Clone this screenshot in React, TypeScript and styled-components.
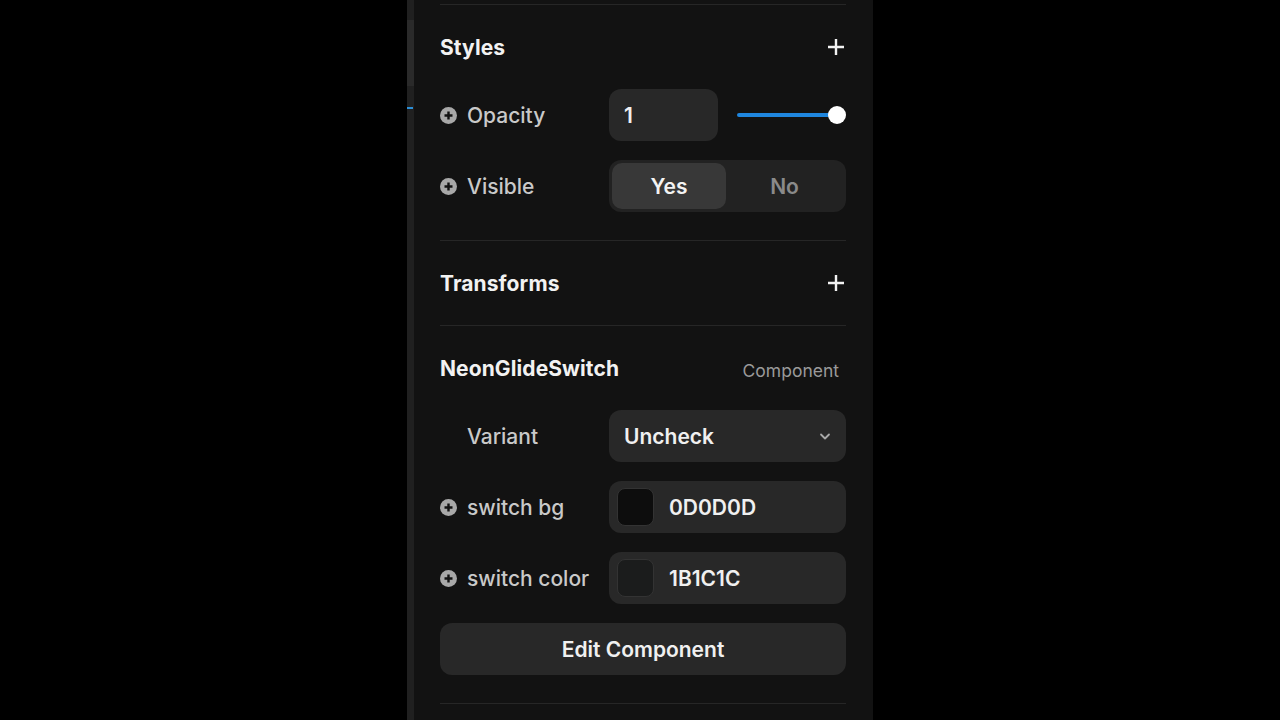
import React from 'react'
import styled, { createGlobalStyle } from 'styled-components'

const Global = createGlobalStyle`
  html, body { margin: 0; padding: 0; background: #000; }
  body { font-family: Inter, 'Noto Sans', sans-serif; -webkit-font-smoothing: antialiased; }
`

const Page = styled.div`
  width: 1280px;
  height: 720px;
  display: flex;
  background: #000;
  overflow: hidden;
`
const Spacer = styled.div`
  width: 407px;
`
const Gutter = styled.div`
  position: relative;
  width: 7px;
  background: #202020;
`
const Thumb = styled.div`
  margin-top: 20px;
  height: 66px;
  background: #2a2a2a;
`
const Tick = styled.div`
  position: absolute;
  top: 107px;
  left: 0;
  width: 6px;
  height: 2px;
  background: #2c8fd6;
`
const Panel = styled.div`
  width: 459px;
  box-sizing: border-box;
  background: #121212;
  padding: 0 27px 0 26px;
  display: flex;
  flex-direction: column;
`
const Section = styled.div<{ top?: boolean }>`
  border-top: 1px solid #262626;
  padding-bottom: ${(p) => (p.top ? 28 : 0)}px;
  display: flex;
  flex-direction: column;
  gap: 19px;
`
const FirstLine = styled.div`
  height: 4px;
`
const Header = styled.div`
  height: 84px;
  margin-bottom: -19px;
  display: flex;
  align-items: center;
  justify-content: space-between;
`
const Title = styled.div`
  color: #f2f2f2;
  font-size: 21px;
  font-weight: 700;
  letter-spacing: 0.1px;
`
const Meta = styled.div`
  color: #9a9a9a;
  font-size: 17.5px;
  margin-right: 7px;
  margin-top: 4px;
`
const Row = styled.div`
  display: grid;
  grid-template-columns: 169px 1fr;
  align-items: center;
  height: 52px;
`
const Label = styled.div<{ indent?: boolean }>`
  display: flex;
  align-items: center;
  gap: 10px;
  padding-left: ${(p) => (p.indent ? 27 : 0)}px;
  color: #c9c9c9;
  font-size: 21px;
  font-weight: 500;
`
const Field = styled.div<{ width?: number }>`
  height: 52px;
  box-sizing: border-box;
  width: ${(p) => (p.width ? p.width + 'px' : '100%')};
  background: #282828;
  border-radius: 12px;
  display: flex;
  align-items: center;
  padding: 0 15px;
  color: #f0f0f0;
  font-size: 21px;
  font-weight: 600;
`
const Split = styled.div`
  display: flex;
  align-items: center;
  gap: 19px;
`
const Track = styled.div`
  position: relative;
  flex: 1;
  height: 4px;
  background: #1f86de;
  border-radius: 2px;
  margin-right: 9px;
`
const Knob = styled.div`
  position: absolute;
  right: -9px;
  top: -7px;
  width: 18px;
  height: 18px;
  border-radius: 50%;
  background: #fff;
`
const Segments = styled.div`
  height: 52px;
  box-sizing: border-box;
  background: #222;
  border-radius: 12px;
  padding: 3px;
  display: grid;
  grid-template-columns: 114px 1fr;
`
const Segment = styled.div<{ active?: boolean }>`
  border-radius: 10px;
  background: ${(p) => (p.active ? '#383838' : 'transparent')};
  color: ${(p) => (p.active ? '#f3f3f3' : '#8a8a8a')};
  font-size: 21px;
  font-weight: 600;
  display: flex;
  align-items: center;
  justify-content: center;
`
const Select = styled(Field)`
  justify-content: space-between;
  padding-right: 14px;
`
const Swatch = styled.div<{ color: string }>`
  width: 37px;
  height: 38px;
  box-sizing: border-box;
  border-radius: 8px;
  background: ${(p) => p.color};
  border: 1px solid #333;
  margin: 0 15px 0 -7px;
`
const Button = styled.div`
  height: 52px;
  border-radius: 12px;
  background: #282828;
  color: #f0f0f0;
  font-size: 21px;
  font-weight: 600;
  display: flex;
  align-items: center;
  justify-content: center;
`

const PlusCircle = () => (
  <svg width="17" height="17" viewBox="0 0 17 17">
    <circle cx="8.5" cy="8.5" r="8.5" fill="#a8a8a8" />
    <path d="M8.5 4.5v8M4.5 8.5h8" stroke="#121212" strokeWidth="2.4" />
  </svg>
)

const Plus = () => (
  <svg width="20" height="20" viewBox="0 0 20 20">
    <path d="M10 2v16M2 10h16" stroke="#f2f2f2" strokeWidth="2.4" />
  </svg>
)

const Chevron = () => (
  <svg width="14" height="14" viewBox="0 0 14 14">
    <path d="M3 5.5l4 4 4-4" stroke="#a8a8a8" strokeWidth="1.8" fill="none" strokeLinecap="round" strokeLinejoin="round" />
  </svg>
)

export default function App() {
  return (
    <Page>
      <Global />
      <Spacer />
      <Gutter>
        <Thumb />
        <Tick />
      </Gutter>
      <Panel>
        <FirstLine />
        <Section top>
          <Header>
            <Title>Styles</Title>
            <Plus />
          </Header>
          <Row>
            <Label><PlusCircle />Opacity</Label>
            <Split>
              <Field width={109}>1</Field>
              <Track><Knob /></Track>
            </Split>
          </Row>
          <Row>
            <Label><PlusCircle />Visible</Label>
            <Segments>
              <Segment active>Yes</Segment>
              <Segment>No</Segment>
            </Segments>
          </Row>
        </Section>
        <Section>
          <Header>
            <Title>Transforms</Title>
            <Plus />
          </Header>
          <div />
        </Section>
        <Section top>
          <Header>
            <Title>NeonGlideSwitch</Title>
            <Meta>Component</Meta>
          </Header>
          <Row>
            <Label indent>Variant</Label>
            <Select>Uncheck<Chevron /></Select>
          </Row>
          <Row>
            <Label><PlusCircle />switch bg</Label>
            <Field><Swatch color="#0d0d0d" />0D0D0D</Field>
          </Row>
          <Row>
            <Label><PlusCircle />switch color</Label>
            <Field><Swatch color="#1b1c1c" />1B1C1C</Field>
          </Row>
          <Button>Edit Component</Button>
        </Section>
        <Section />
      </Panel>
    </Page>
  )
}
